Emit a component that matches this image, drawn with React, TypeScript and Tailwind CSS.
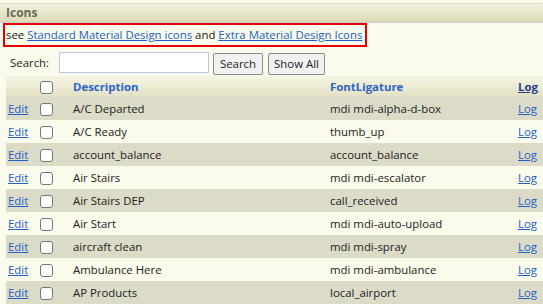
import { useState } from "react";

const rows = [
  ["A/C Departed", "mdi mdi-alpha-d-box"],
  ["A/C Ready", "thumb_up"],
  ["account_balance", "account_balance"],
  ["Air Stairs", "mdi mdi-escalator"],
  ["Air Stairs DEP", "call_received"],
  ["Air Start", "mdi mdi-auto-upload"],
  ["aircraft clean", "mdi mdi-spray"],
  ["Ambulance Here", "mdi mdi-ambulance"],
  ["AP Products", "local_airport"],
];

function Box() {
  return (
    <span className="inline-block h-[13px] w-[13px] rounded-[3px] border border-[#777] bg-white align-middle" />
  );
}

export default function App() {
  const [q, setQ] = useState("");

  return (
    <div className="h-[304px] w-[543px] overflow-hidden bg-[#fafbeb] pt-[3px] font-['Open_Sans',sans-serif] text-[11.4px] text-[#222]">
      {/* Panel header */}
      <div className="flex h-[20px] items-center border-t border-b border-t-[#dedcbc] border-b-[#c9cdd6] bg-gradient-to-b from-[#f2f1de] to-[#dcdab6] px-[6px] text-[12px] font-bold text-[#6b6a52]">
        Icons
      </div>

      {/* Links */}
      <div className="ml-[3px] h-[24px] w-[364px] whitespace-nowrap border-2 border-[#e60000] px-[1px] leading-[20px]">
        see{" "}
        <a href="#" className="text-[#2060c8] underline">Standard Material Design icons</a>
        {" "}and{" "}
        <a href="#" className="text-[#2060c8] underline">Extra Material Design Icons</a>
      </div>

      {/* Search */}
      <div className="mt-[3px] flex h-[25px] items-center pl-[10px]">
        <span className="w-[49px]">Search:</span>
        <input
          value={q}
          onChange={(e) => setQ(e.target.value)}
          className="h-[21px] w-[150px] border border-[#b9cbe4] bg-white px-1 outline-none"
        />
        <button className="ml-[4px] mt-[3px] h-[22px] w-[50px] rounded-[2px] border border-[#8a8a8a] bg-[#f1f1f1]">Search</button>
        <button className="ml-[5px] mt-[3px] h-[22px] w-[57px] rounded-[2px] border border-[#8a8a8a] bg-[#f1f1f1]">Show All</button>
      </div>

      {/* Table */}
      <table className="ml-[6px] mt-[1px] w-[540px] table-fixed border-collapse">
        <colgroup>
          <col className="w-[29px]" />
          <col className="w-[31px]" />
          <col className="w-[257px]" />
          <col className="w-[188px]" />
          <col />
        </colgroup>
        <thead>
          <tr className="h-[21px] bg-gradient-to-b from-[#f6f5e4] to-[#e2e0c4] text-left font-bold">
            <th />
            <th className="pl-[5px]"><Box /></th>
            <th className="pl-[7px] text-[#2a64c8]">Description</th>
            <th className="pl-[7px] text-[#2a64c8]">FontLigature</th>
            <th className="pl-[7px] text-[#1f3f8c] underline">Log</th>
          </tr>
        </thead>
        <tbody>
          {rows.map(([d, f], i) => (
            <tr key={d} className={i % 2 === 0 ? "h-[23px] bg-[#dcdbc7]" : "h-[23px] bg-[#fafbeb]"}>
              <td className="pl-[2px]"><a href="#" className="text-[#2060c8] underline">Edit</a></td>
              <td className="pl-[5px]"><Box /></td>
              <td className="pl-[7px]">{d}</td>
              <td className="pl-[7px]">{f}</td>
              <td className="pl-[7px]"><a href="#" className="text-[#2060c8] underline">Log</a></td>
            </tr>
          ))}
        </tbody>
      </table>
    </div>
  );
}
